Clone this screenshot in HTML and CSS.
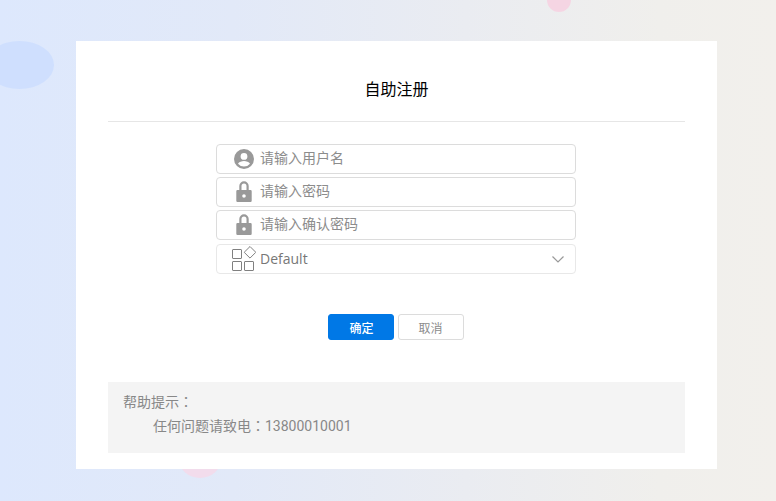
FILE: index.html
```html
<!DOCTYPE html>
<html lang="zh">
<head>
<meta charset="utf-8">
<title>自助注册</title>
<link rel="stylesheet" href="styles.css">
</head>
<body>
<div class="page">
  <div class="blob blob-blue"></div>
  <div class="blob blob-pink-top"></div>
  <div class="blob blob-pink-bottom"></div>
  <main class="card">
    <h1 class="title">自助注册</h1>
    <form class="form">
      <div class="field">
        <svg class="icon" width="20" height="20" viewBox="0 0 20 20"><path fill="#999" fill-rule="evenodd" d="M10 0a10 10 0 1 0 0 20a10 10 0 0 0 0-20zM10 4a3.400 3.400 0 1 1 0 6.800a3.400 3.400 0 0 1 0-6.800zM10 17.600a7.800 7.800 0 0 1-6-2.900c.9-1.800 3.800-2.700 6-2.700s5.100.9 6 2.700a7.800 7.800 0 0 1-6 2.900z"/></svg>
        <span class="placeholder">请输入用户名</span>
      </div>
      <div class="field">
        <svg class="icon" width="20" height="22" viewBox="0 0 20 22"><path fill="#999" fill-rule="evenodd" d="M5.300 9V5a4.700 4.700 0 0 1 9.400 0v4h1.800a1.200 1.200 0 0 1 1.200 1.200v9.600a1.200 1.200 0 0 1-1.200 1.200H3.500a1.200 1.200 0 0 1-1.200-1.200v-9.600A1.200 1.200 0 0 1 3.500 9zM7.500 9h5V5a2.500 2.500 0 0 0-5 0zM10 13.200a1.800 1.800 0 1 0 0 3.600a1.800 1.800 0 0 0 0-3.600z"/></svg>
        <span class="placeholder">请输入密码</span>
      </div>
      <div class="field">
        <svg class="icon" width="20" height="22" viewBox="0 0 20 22"><path fill="#999" fill-rule="evenodd" d="M5.300 9V5a4.700 4.700 0 0 1 9.400 0v4h1.800a1.200 1.200 0 0 1 1.200 1.200v9.600a1.200 1.200 0 0 1-1.200 1.200H3.500a1.200 1.200 0 0 1-1.200-1.200v-9.600A1.200 1.200 0 0 1 3.500 9zM7.500 9h5V5a2.500 2.500 0 0 0-5 0zM10 13.200a1.800 1.800 0 1 0 0 3.600a1.800 1.800 0 0 0 0-3.600z"/></svg>
        <span class="placeholder">请输入确认密码</span>
      </div>
      <div class="field field-select">
        <svg class="icon icon-grid" width="24" height="26" viewBox="0 0 24 26" fill="none" stroke="#808080" stroke-width="1"><rect x="0.500" y="3.500" width="9" height="9" rx=".5"/><rect x="0.500" y="15.500" width="9" height="9" rx=".5"/><rect x="12.500" y="15.500" width="9" height="9" rx=".5"/><path d="M18 .5l5.800 5.800l-5.800 5.800l-5.800-5.800z"/></svg>
        <span class="select-value">Default</span>
        <svg class="chevron" width="12" height="7" viewBox="0 0 12 7" fill="none" stroke="#999" stroke-width="1.200"><path d="M.5.500L6 6l5.500-5.500"/></svg>
      </div>
    </form>
    <div class="actions">
      <button type="button" class="btn btn-primary">确定</button>
      <button type="button" class="btn btn-default">取消</button>
    </div>
    <section class="help" lang="zh-TW">
      <p class="help-title">帮助提示：</p>
      <p class="help-line">任何问题请致电：13800010001</p>
    </section>
  </main>
</div>
</body>
</html>
```

FILE: styles.css
```css
* {
  box-sizing: border-box;
}

html,
body {
  margin: 0;
  padding: 0;
  height: 100%;
}

body {
  font-family: Roboto, "Noto Sans CJK SC", sans-serif;
  overflow: hidden;
}

.page {
  position: relative;
  width: 776px;
  height: 501px;
  padding: 41px 0 0 76px;
  overflow: hidden;
  background: linear-gradient(90deg, #dde8fd 0%, #e2e9f8 30%, #eaecf1 60%, #f0efec 85%, #f2f0ec 100%);
}

.blob {
  position: absolute;
  border-radius: 50%;
}

.blob-blue {
  left: -15px;
  top: 41px;
  width: 69px;
  height: 48px;
  background: #cfdffe;
}

.blob-pink-top {
  left: 547px;
  top: -12px;
  width: 24px;
  height: 24px;
  background: #f5d5e3;
}

.blob-pink-bottom {
  left: 179px;
  top: 440px;
  width: 42px;
  height: 38px;
  background: #f2dcec;
}

.card {
  position: relative;
  width: 641px;
  height: 428px;
  padding: 0 32px;
  background: #fff;
}

.title {
  height: 81px;
  margin: 0;
  padding-top: 39px;
  border-bottom: 1px solid #e6e6e6;
  font-size: 16px;
  font-weight: 400;
  line-height: 20px;
  text-align: center;
  color: #000;
}

.form {
  display: flex;
  flex-direction: column;
  gap: 3px;
  width: 360px;
  margin: 22px 0 0 108px;
}

.field {
  display: flex;
  align-items: center;
  height: 30px;
  padding-left: 17px;
  border: 1px solid #dcdcdc;
  border-radius: 4px;
  background: #fff;
}

.field-select {
  margin-top: 1px;
  padding-left: 15px;
  padding-right: 11px;
  border-color: #e8e8e8;
}

.icon {
  flex: none;
  margin-right: 6px;
}

.icon-grid {
  margin-right: 4px;
}

.placeholder {
  padding-bottom: 2px;
  font-size: 14px;
  line-height: 20px;
  color: #8c8c8c;
}

.select-value {
  flex: 1;
  padding-bottom: 2px;
  font-family: "Open Sans", sans-serif;
  font-size: 14px;
  color: #777;
}

.chevron {
  flex: none;
}

.actions {
  display: flex;
  justify-content: center;
  gap: 4px;
  margin-top: 40px;
  padding-right: 2px;
}

.btn {
  width: 66px;
  height: 26px;
  padding: 0;
  border: 1px solid #dcdcdc;
  border-radius: 3px;
  font-family: inherit;
  font-size: 12px;
}

.btn-primary {
  padding-left: 2px;
  border-color: #0078e6;
  background: #0078e6;
  color: #fff;
  font-weight: 500;
}

.btn-default {
  background: #fff;
  color: #8c8c8c;
}

.help {
  height: 71px;
  margin-top: 42px;
  padding: 8px 15px;
  background: #f4f4f4;
  font-family: Roboto, "Noto Sans CJK TC", sans-serif;
  font-size: 14px;
  line-height: 24px;
  color: #888;
}

.help p {
  margin: 0;
}

.help-line {
  padding-left: 30px;
}
```
